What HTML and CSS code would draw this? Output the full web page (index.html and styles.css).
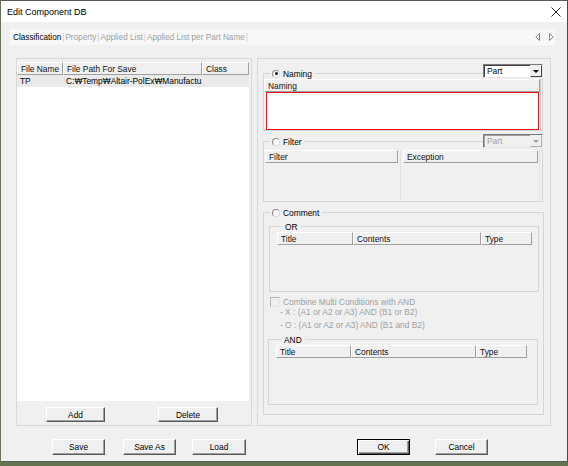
FILE: index.html
```html
<!DOCTYPE html>
<html>
<head>
<meta charset="utf-8">
<link rel="stylesheet" href="styles.css">
</head>
<body>
<div class="window">
  <div class="titlebar">
    <span class="title">Edit Component DB</span>
    <svg class="close" width="10" height="10" viewBox="0 0 10 10"><path d="M0.5 0.5L9.5 9.5M9.5 0.5L0.5 9.5" stroke="#222" stroke-width="1"/></svg>
  </div>
  <div class="tabs">
    <span class="tab active">Classification</span><span class="sep">|</span>
    <span class="tab">Property</span><span class="sep">|</span>
    <span class="tab">Applied List</span><span class="sep">|</span>
    <span class="tab">Applied List per Part Name</span><span class="sep">|</span>
    <span class="spacer"></span>
    <svg class="arr" width="6" height="8" viewBox="0 0 6 8"><path d="M4.5 0.5L0.8 4L4.5 7.5Z" fill="none" stroke="#888" stroke-width="1"/></svg>
    <svg class="arr arr2" width="6" height="8" viewBox="0 0 6 8"><path d="M1.5 0.5L5.2 4L1.5 7.5Z" fill="none" stroke="#888" stroke-width="1"/></svg>
  </div>
  <div class="main">
    <div class="leftgrp">
      <div class="filelist">
        <div class="hdr">
          <div class="hc" style="width:46px">File Name</div>
          <div class="hc" style="width:139px">File Path For Save</div>
          <div class="hc" style="width:47px">Class</div>
        </div>
        <div class="row sel">
          <div class="rc" style="width:46px">TP</div>
          <div class="rc" style="width:139px">C:₩Temp₩Altair-PolEx₩Manufactu</div>
          <div class="rc" style="width:47px"></div>
        </div>
      </div>
      <div class="btnrow">
        <div class="btn add">Add</div>
        <div class="btn del">Delete</div>
      </div>
    </div>
    <div class="rightgrp">
      <div class="grp naming">
        <div class="legend"><span class="radio on"></span><span>Naming</span></div>
        <div class="combo"><span>Part</span><span class="cbtn"><i></i></span></div>
        <div class="nlist">
          <div class="hc full">Naming</div>
          <div class="redbox"></div>
        </div>
      </div>
      <div class="grp filter">
        <div class="legend"><span class="radio"></span><span>Filter</span></div>
        <div class="combo dis"><span>Part</span><span class="cbtn"><i></i></span></div>
        <div class="flists">
          <div class="flist f1"><div class="hc full">Filter</div></div>
          <div class="flist f2"><div class="hc full">Exception</div></div>
        </div>
      </div>
      <div class="grp comment">
        <div class="legend"><span class="radio"></span><span>Comment</span></div>
        <div class="grp sub or">
          <div class="legend sublg"><span>OR</span></div>
          <div class="slist">
            <div class="hdr">
              <div class="hc" style="width:76px">Title</div>
              <div class="hc" style="width:128px">Contents</div>
              <div class="hc" style="width:51px">Type</div>
            </div>
          </div>
        </div>
        <div class="combine">
          <div class="cbrow"><span class="chk"></span><span>Combine Multi Conditions with AND</span></div>
          <div class="cl l2">- X : (A1 or A2 or A3) AND (B1 or B2)</div>
          <div class="cl l3">- O : (A1 or A2 or A3) AND (B1 and B2)</div>
        </div>
        <div class="grp sub and">
          <div class="legend sublg"><span>AND</span></div>
          <div class="slist">
            <div class="hdr">
              <div class="hc" style="width:75px">Title</div>
              <div class="hc" style="width:125px">Contents</div>
              <div class="hc" style="width:51px">Type</div>
            </div>
          </div>
        </div>
      </div>
    </div>
  </div>
  <div class="bottom">
    <div class="btn b-save">Save</div>
    <div class="btn b-saveas">Save As</div>
    <div class="btn b-load">Load</div>
    <div class="btn def b-ok">OK</div>
    <div class="btn b-cancel">Cancel</div>
  </div>
</div>
</body>
</html>
```
FILE: styles.css
```css
* { box-sizing: border-box; }
html, body { margin: 0; padding: 0; }
body {
  background: #66734f;
  width: 568px;
  height: 466px;
  overflow: hidden;
  font-family: "Liberation Sans", Arial, sans-serif;
  font-size: 8.4px;
  color: #000;
}
.window {
  width: 567px;
  height: 462px;
  margin-left: 1px;
  background: #f0f0f0;
  border-top: 1px solid #5a5a5a;
  border-right: 1px solid #4a4a4a;
  border-bottom: 1px solid #5a5a5a;
  display: flex;
  flex-direction: column;
}
.titlebar {
  height: 21px;
  background: #fff;
  display: flex;
  align-items: center;
  padding-left: 6px;
  padding-right: 4px;
}
.title { font-size: 9px; flex: 1; color: #000; }
.close { margin-right: 2px; }
.tabs {
  margin: 7px 12px 0 9px;
  height: 16px;
  background: #f8f8f8;
  display: flex;
  align-items: center;
  padding-left: 3px;
  color: #a0a0a0;
  font-size: 8.2px;
}
.tab.active { color: #000; }
.sep { color: #c8c8c8; margin: 0 1px 0 1px; }
.spacer { flex: 1; }
.arr { margin-right: 7px; }
.arr2 { margin-right: 1px; }
.main {
  display: flex;
  margin-top: 13px;
  margin-left: 15px;
  height: 368px;
}
.leftgrp {
  width: 236px;
  border: 1px solid #d8d8d8;
  padding-top: 3px;
  display: flex;
  flex-direction: column;
}
.filelist {
  width: 232px;
  height: 339px;
  background: #fff;
}
.hdr { display: flex; height: 13px; }
.hc {
  height: 13px;
  line-height: 12px;
  padding-left: 3px;
  background: #f0f0f0;
  border-top: 1px solid #fff;
  border-left: 1px solid #fff;
  border-right: 1px solid #a0a0a0;
  border-bottom: 1px solid #a0a0a0;
  color: #111;
  white-space: nowrap;
  overflow: hidden;
}
.hc.full { width: 100%; }
.row { display: flex; height: 12px; line-height: 12px; }
.row.sel { background: #eaeaea; }
.rc { padding-left: 3px; white-space: nowrap; overflow: hidden; }
.btnrow { display: flex; margin-top: 6px; }
.btn {
  height: 15px;
  background: #f0f0f0;
  border-top: 1px solid #fff;
  border-left: 1px solid #fff;
  border-right: 1px solid #5a5a5a;
  border-bottom: 1px solid #5a5a5a;
  box-shadow: inset -1px -1px 0 #a0a0a0;
  display: flex;
  align-items: center;
  justify-content: center;
  color: #000;
}
.add { margin-left: 29px; width: 59px; }
.del { margin-left: 53px; width: 60px; }
.rightgrp {
  width: 294px;
  margin-left: 5px;
  border: 1px solid #d8d8d8;
  padding-left: 5px;
  padding-top: 14px;
  display: flex;
  flex-direction: column;
}
.grp {
  position: relative;
  border: 1px solid #d5d5d5;
}
.legend {
  position: absolute;
  top: -6px;
  left: 6px;
  height: 11px;
  padding: 0 3px 0 2px;
  background: #f0f0f0;
  display: flex;
  align-items: center;
  gap: 3px;
  white-space: nowrap;
}
.radio {
  width: 8px;
  height: 8px;
  border-radius: 50%;
  background: #fff;
  border: 1px solid #8a8a8a;
  border-right-color: #dcdcdc;
  border-bottom-color: #dcdcdc;
  position: relative;
}
.radio.on::after {
  content: "";
  position: absolute;
  left: 1.5px;
  top: 1.5px;
  width: 3px;
  height: 3px;
  border-radius: 50%;
  background: #000;
}
.combo {
  position: absolute;
  right: -1px;
  width: 60px;
  height: 14px;
  background: #fff;
  border-top: 1px solid #7a7a7a;
  border-left: 1px solid #7a7a7a;
  border-right: 1px solid #e8e8e8;
  border-bottom: 1px solid #e8e8e8;
  box-shadow: inset 1px 1px 0 #404040;
  display: flex;
  align-items: center;
  padding-left: 3px;
}
.combo span:first-child { flex: 1; }
.combo.dis { background: #f0f0f0; color: #a0a0a0; box-shadow: inset 1px 1px 0 #a0a0a0; }
.cbtn {
  width: 12px;
  height: 12px;
  margin-right: 0;
  background: #f0f0f0;
  border-top: 1px solid #f0f0f0;
  border-left: 1px solid #f0f0f0;
  border-right: 1px solid #404040;
  border-bottom: 1px solid #404040;
  display: flex;
  align-items: center;
  justify-content: center;
}
.cbtn i {
  width: 0;
  height: 0;
  border-left: 3px solid transparent;
  border-right: 3px solid transparent;
  border-top: 3px solid #000;
}
.combo.dis .cbtn { border-right-color: #b0b0b0; border-bottom-color: #b0b0b0; }
.combo.dis .cbtn i { border-top-color: #a0a0a0; }
.naming { width: 280px; height: 58px; padding: 5px 1px 0 0; }
.naming .combo { top: -10px; }
.nlist {
  height: 51px;
  border-right: 1px solid #c8c8c8;
}
.redbox {
  margin-left: 2px;
  width: 273px;
  height: 38px;
  background: #fff;
  border: 1.5px solid #ee1111;
}
.filter { width: 280px; height: 61px; margin-top: 10px; padding: 7px 1px 1px 0; }
.filter .combo { top: -8px; }
.flists { display: flex; height: 51px; }
.flist { height: 51px; border-right: 1px solid #e2e2e2; }
.f1 { width: 137px; padding: 1px 2px 0 1px; }
.f2 { width: 139px; padding: 1px 1px 0 2px; }
.comment { width: 281px; height: 203px; margin-top: 10px; padding: 13px 0 0 5px; }
.sub { width: 270px; height: 66px; }
.sublg { left: 12px; padding: 0 3px; }
.slist { margin: 4px 0 0 5px; width: 259px; height: 59px; padding: 1px 0 0 2px; }
.combine { color: #a0a0a0; padding-top: 4px; height: 47px; }
.cbrow { display: flex; align-items: center; height: 12px; gap: 3px; margin-left: 1px; }
.chk {
  width: 10px;
  height: 10px;
  background: #f0f0f0;
  border: 1px solid #b4b4b4;
  border-right-color: #e6e6e6;
  border-bottom-color: #e6e6e6;
}
.cl { margin-left: 11px; height: 12px; line-height: 12px; }
.l2 { margin-top: -2px; }
.l3 { margin-top: 1px; }
.and { width: 270px; height: 66px; margin-left: -1px; margin-top: 0; }
.and .slist { margin-left: 6px; width: 255px; padding-left: 1px; }
.bottom { display: flex; margin-top: 13px; }
.bottom .btn { height: 16px; }
.b-save { margin-left: 51px; width: 53px; }
.b-saveas { margin-left: 18px; width: 53px; }
.b-load { margin-left: 16px; width: 54px; }
.b-ok { margin-left: 111px; width: 53px; }
.b-cancel { margin-left: 25px; width: 53px; }
.btn.def {
  border: 1px solid #000;
  box-shadow: inset 1px 1px 0 #fff, inset -1px -1px 0 #5a5a5a, inset -2px -2px 0 #a0a0a0;
}
```
